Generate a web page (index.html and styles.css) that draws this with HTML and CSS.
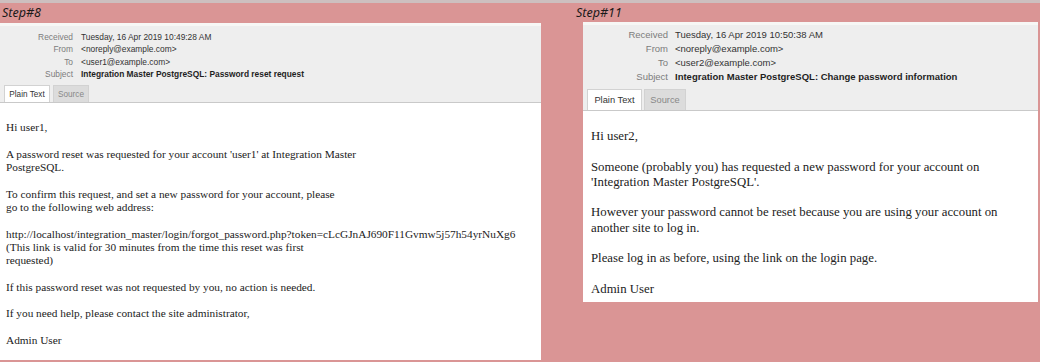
FILE: index.html
```html
<!DOCTYPE html>
<html lang="en">
<head>
  <meta charset="UTF-8" />
  <title>Password mails</title>
  <link rel="stylesheet" href="styles.css">
</head>
<body>
  <div class="top-strip"></div>

  <div class="steps">
    <!-- Step 8 -->
    <div class="step step-small">
      <div class="step-label">Step#8</div>
      <div class="mail">
        <div class="mail-head">
          <div class="row"><span class="key">Received</span><span class="val">Tuesday, 16 Apr 2019 10:49:28 AM</span></div>
          <div class="row"><span class="key">From</span><span class="val">&lt;noreply@example.com&gt;</span></div>
          <div class="row"><span class="key">To</span><span class="val">&lt;user1@example.com&gt;</span></div>
          <div class="row"><span class="key">Subject</span><span class="val subject">Integration Master PostgreSQL: Password reset request</span></div>
          <div class="tabs">
            <span class="tab active">Plain Text</span>
            <span class="tab">Source</span>
          </div>
        </div>
        <div class="mail-body">Hi user1,

A password reset was requested for your account 'user1' at Integration Master
PostgreSQL.

To confirm this request, and set a new password for your account, please
go to the following web address:

http://localhost/integration_master/login/forgot_password.php?token=cLcGJnAJ690F11Gvmw5j57h54yrNuXg6
(This link is valid for 30 minutes from the time this reset was first
requested)

If this password reset was not requested by you, no action is needed.

If you need help, please contact the site administrator,

Admin User</div>
      </div>
    </div>

    <!-- Step 11 -->
    <div class="step step-large">
      <div class="step-label">Step#11</div>
      <div class="mail">
        <div class="mail-head">
          <div class="row"><span class="key">Received</span><span class="val">Tuesday, 16 Apr 2019 10:50:38 AM</span></div>
          <div class="row"><span class="key">From</span><span class="val">&lt;noreply@example.com&gt;</span></div>
          <div class="row"><span class="key">To</span><span class="val">&lt;user2@example.com&gt;</span></div>
          <div class="row"><span class="key">Subject</span><span class="val subject">Integration Master PostgreSQL: Change password information</span></div>
          <div class="tabs">
            <span class="tab active">Plain Text</span>
            <span class="tab">Source</span>
          </div>
        </div>
        <div class="mail-body">Hi user2,

Someone (probably you) has requested a new password for your account on
'Integration Master PostgreSQL'.

However your password cannot be reset because you are using your account on
another site to log in.

Please log in as before, using the link on the login page.

Admin User</div>
      </div>
    </div>
  </div>
</body>
</html>
```

FILE: styles.css
```css
body {
  margin: 0;
  background: #da9595;
  font-family: 'Liberation Sans', Arial, sans-serif;
  width: 1040px;
  height: 362px;
  overflow: hidden;
}

.top-strip {
  height: 3px;
  background: #cdbfbf;
}

.steps {
  display: flex;
}

.step-label {
  font-family: 'Noto Sans', sans-serif;
  font-style: italic;
  font-size: 12.5px;
  line-height: 20px;
  color: #1a1a1a;
  padding-left: 2px;
  height: 20px;
}

.mail {
  background: #fff;
}

.mail-head {
  background: #eeeeee;
  border-top: 3px solid #f7f7f5;
  border-bottom: 1px solid #c9c9c9;
}

.row {
  display: flex;
}

.key {
  text-align: right;
  color: #7c7c7c;
  flex-shrink: 0;
}

.val {
  color: #333;
}

.subject {
  font-weight: bold;
  color: #1e1e1e;
}

.tabs {
  display: flex;
  align-items: flex-end;
}

.tab {
  box-sizing: border-box;
  border: 1px solid #d2d2d2;
  border-bottom: none;
  background: #dcdcdc;
  color: #888;
  display: flex;
  align-items: center;
  justify-content: center;
}

.tab.active {
  background: #fff;
  color: #333;
}

.mail-body {
  white-space: pre;
  font-family: 'Liberation Serif', 'Times New Roman', serif;
  color: #222;
}

/* Step 8: the smaller capture */
.step-small {
  width: 541px;
}
.step-small .mail {
  height: 337px;
}
.step-small .mail-head {
  padding-top: 5px;
  font-size: 8.4px;
}
.step-small .row {
  line-height: 12.3px;
}
.step-small .key {
  width: 73px;
  margin-right: 8px;
}
.step-small .tabs {
  margin-top: 5px;
  padding-left: 4px;
  gap: 3px;
}
.step-small .tab {
  height: 17px;
  font-size: 8.2px;
}
.step-small .tab.active { width: 46px; }
.step-small .tab:not(.active) { width: 36px; }
.step-small .mail-body {
  font-size: 11.3px;
  line-height: 13.3px;
  padding: 18px 6px 0;
}

/* Step 11: the larger capture */
.step-large {
  margin-left: 35px;
  width: 462px;
}
.step-large .step-label {
  padding-left: 0;
}
.step-large .mail {
  margin-left: 7px;
  margin-top: -1px;
  height: 280px;
}
.step-large .mail-head {
  padding-top: 3px;
  font-size: 9.5px;
}
.step-large .row {
  line-height: 14px;
}
.step-large .key {
  width: 85px;
  margin-right: 7px;
}
.step-large .tabs {
  margin-top: 5px;
  padding-left: 4px;
  gap: 2px;
}
.step-large .tab {
  height: 21px;
  font-size: 9.3px;
}
.step-large .tab.active { width: 55px; }
.step-large .tab:not(.active) { width: 42px; }
.step-large .mail-body {
  font-size: 12.8px;
  line-height: 15.3px;
  padding: 18px 8px 0;
}
```
